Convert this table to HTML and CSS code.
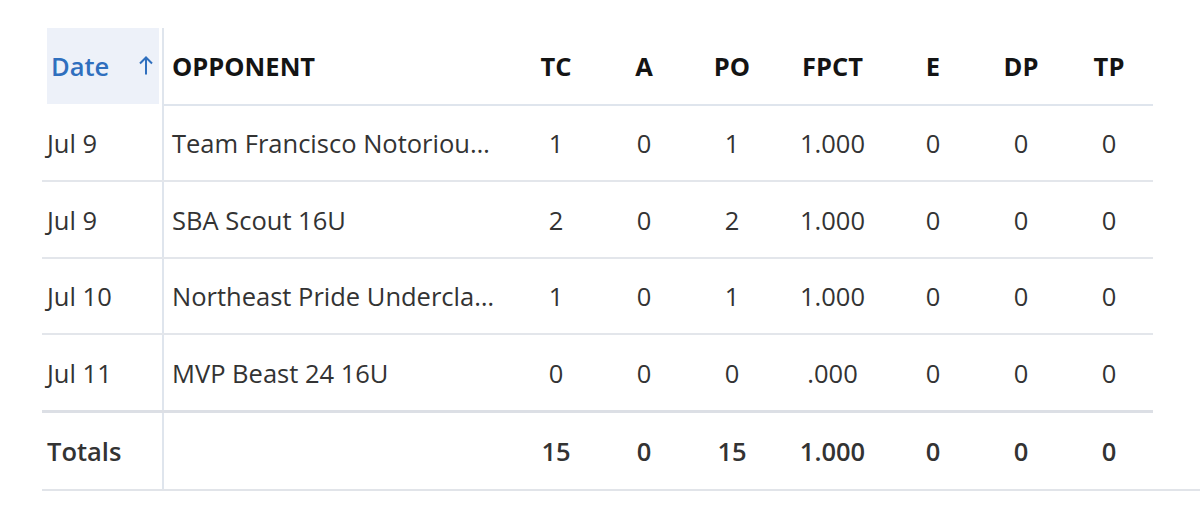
FILE: index.html
```html
<!DOCTYPE html>
<html>
<head>
<meta charset="utf-8">
<link rel="stylesheet" href="styles.css">
</head>
<body>
<div class="wrap">
<table class="stats">
  <colgroup>
    <col class="c-date"><col class="c-opp"><col class="c-n"><col class="c-n"><col class="c-n"><col class="c-fpct"><col class="c-n"><col class="c-n"><col class="c-n">
  </colgroup>
  <thead>
    <tr>
      <th class="date"><div class="sort"><span>Date</span><svg class="arrow" width="14" height="19" viewBox="0 0 14 19"><path d="M7 18.5V1.5M1 7.5L7 1.5L13 7.5" fill="none" stroke="currentColor" stroke-width="2"/></svg></div></th>
      <th class="opp">OPPONENT</th>
      <th>TC</th><th>A</th><th>PO</th><th>FPCT</th><th>E</th><th>DP</th><th>TP</th>
    </tr>
  </thead>
  <tbody>
    <tr><td class="date">Jul 9</td><td class="opp">Team Francisco Notorious 16U</td><td>1</td><td>0</td><td>1</td><td>1.000</td><td>0</td><td>0</td><td>0</td></tr>
    <tr><td class="date">Jul 9</td><td class="opp">SBA Scout 16U</td><td>2</td><td>0</td><td>2</td><td>1.000</td><td>0</td><td>0</td><td>0</td></tr>
    <tr><td class="date">Jul 10</td><td class="opp">Northeast Pride Underclass 16U</td><td>1</td><td>0</td><td>1</td><td>1.000</td><td>0</td><td>0</td><td>0</td></tr>
    <tr><td class="date">Jul 11</td><td class="opp">MVP Beast 24 16U</td><td>0</td><td>0</td><td>0</td><td>.000</td><td>0</td><td>0</td><td>0</td></tr>
  </tbody>
  <tfoot>
    <tr><td class="date">Totals</td><td class="opp"></td><td>15</td><td>0</td><td>15</td><td>1.000</td><td>0</td><td>0</td><td>0</td></tr>
  </tfoot>
</table>
</div>
</body>
</html>
```
FILE: styles.css
```css
html, body {
  margin: 0;
  padding: 0;
  background: #ffffff;
}
body {
  font-family: "Open Sans", "Noto Sans", sans-serif;
  color: #333333;
}
.wrap {
  margin: 28px 0 0 42px;
  border-bottom: 2px solid #e1e4e9;
}
.stats {
  width: 1110px;
  border-collapse: collapse;
  table-layout: fixed;
  font-size: 25.5px;
}
.c-date { width: 121px; }
.c-opp { width: 349px; }
.c-n { width: 88px; }
.c-fpct { width: 113px; }
.stats th,
.stats td {
  padding: 0;
  text-align: center;
  white-space: nowrap;
  overflow: hidden;
  text-overflow: ellipsis;
}
.stats th {
  height: 76px;
  font-weight: 700;
  color: #141414;
  border-bottom: 2px solid #dfe5ed;
}
.stats th.date {
  border-bottom: none;
  text-align: left;
  vertical-align: top;
}
.sort {
  margin: 0 3px 0 5px;
  height: 76px;
  background: #edf1f9;
  color: #2f6fbe;
  display: flex;
  align-items: center;
  justify-content: space-between;
  padding: 0 6px 0 4px;
  font-weight: 600;
}
.arrow {
  display: block;
  margin-top: -2px;
}
.stats .date {
  border-right: 2px solid #dfe5ed;
}
.stats td {
  height: 74px;
  border-bottom: 2px solid #e3e6eb;
}
.stats tbody tr:nth-child(2) td,
.stats tbody tr:nth-child(4) td {
  height: 75px;
}
.stats td.date {
  text-align: left;
  padding-left: 5px;
}
.stats .opp {
  text-align: left;
  padding-left: 8px;
  padding-right: 12px;
}
.stats tfoot td {
  height: 76px;
  font-weight: 600;
  color: #333333;
  border-top: 3px solid #dcdfe5;
  border-bottom: none;
}
```
